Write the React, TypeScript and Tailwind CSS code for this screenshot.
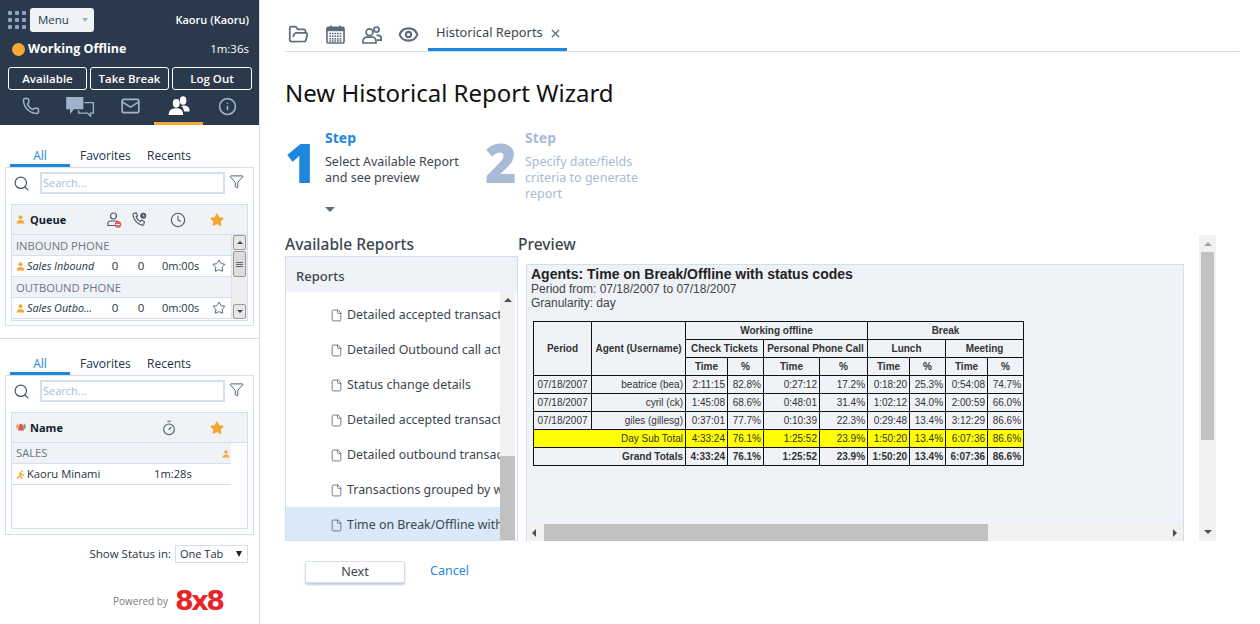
import React from 'react';
import { Phone, Mail, Info, Search, Funnel, Clock, Star, FolderOpen, Eye, X, File, Timer } from 'lucide-react';

const Person = ({ className }: { className?: string }) => (
  <svg viewBox="0 0 10 10" className={className} fill="currentColor">
    <circle cx="5" cy="2.6" r="2.2" />
    <path d="M0.8 9.4c0-2.6 1.6-3.8 4.2-3.8s4.2 1.2 4.2 3.8z" />
  </svg>
);

const PersonBlocked = () => (
  <svg viewBox="0 0 15 16" className="w-[15px] h-[16px] text-[#4a5868]">
    <circle cx="6.500" cy="4" r="3" fill="none" stroke="currentColor" strokeWidth="1.2" />
    <path d="M0.800 13.500v-1.500c0-2 1.500-3 3.200-3h5c1 0 1.800.3 2.400 1M.8 13.500h7" fill="none" stroke="currentColor" strokeWidth="1.2" />
    <circle cx="11" cy="12.500" r="3.200" fill="#e8555a" />
    <rect x="9" y="12" width="4" height="1.100" fill="#fff" />
  </svg>
);

const PhoneClock = () => (
  <svg viewBox="0 0 16 16" className="w-[15px] h-[15px] text-[#4a5868]" fill="none" stroke="currentColor" strokeWidth="1.2">
    <path d="M2 1.500l2.500-.5 1.500 3-1.500 1.300c.7 2 2.200 3.800 4.300 4.800l1.400-1.400 3 1.500-.5 2.800c-.3.8-1 1.200-2 1C5.500 13 1.500 8 1 3c0-.7.300-1.200 1-1.500z" />
    <circle cx="12" cy="4" r="3.200" fill="currentColor" stroke="none" />
    <path d="M12 2.500V4.300h1.500" stroke="#eff2f7" strokeWidth="0.900" />
  </svg>
);

const PeopleSolid = ({ className }: { className?: string }) => (
  <svg viewBox="0 0 24 22" className={className} fill="currentColor">
    <ellipse cx="16.5" cy="5" rx="3.6" ry="4.6" />
    <path d="M14.5 11c3-1 6-.5 8 1.500 1 1.200 1.200 3 1 4.500h-6c-.2-2.500-1.200-4.500-3-6z" />
    <ellipse cx="9" cy="8" rx="3.8" ry="4.8" />
    <path d="M0.600 21c0-5 2.600-7.600 8.400-7.600s7.500 2.600 7.500 7.600z" />
  </svg>
);

const ChatBubbles = ({ className }: { className?: string }) => (
  <svg viewBox="0 0 30 22" className={className}>
    <path d="M0 1h18v13H8l-4 5v-5H0z" fill="currentColor" />
    <path d="M19 7h9.500v11h-3v3l-3-3H13v-3" fill="none" stroke="currentColor" strokeWidth="1.400" />
  </svg>
);

const CalendarGrid = () => (
  <svg viewBox="0 0 20 20" className="w-[19px] h-[19px] text-[#5c6b7d]">
    <rect x="1" y="2.500" width="18" height="16.500" rx="1.500" fill="none" stroke="currentColor" strokeWidth="1.700" />
    <rect x="1" y="2.500" width="18" height="4" fill="currentColor" />
    <rect x="4.500" y="0.500" width="1.600" height="3" fill="currentColor" />
    <rect x="13.900" y="0.500" width="1.600" height="3" fill="currentColor" />
    {[8.2, 11, 13.8, 16].map((y) =>
      [3.5, 6.2, 8.9, 11.6, 14.3].map((x) => <rect key={`${x}-${y}`} x={x} y={y} width="1.800" height="1.600" fill="currentColor" />)
    )}
  </svg>
);

const PeopleOutline = () => (
  <svg viewBox="0 0 20 18" className="w-[20px] h-[18px] text-[#5c6b7d]" fill="none" stroke="currentColor" strokeWidth="1.700">
    <circle cx="7.500" cy="6.200" r="3.400" />
    <path d="M1 17v-1.800c0-2.600 2-4 4-4h5c2 0 4 1.400 4 4V17z" />
    <circle cx="14.500" cy="3.600" r="2.600" />
    <path d="M14.500 9.400h1.500c2 0 3.200 1.200 3.200 3.200v1.600h-4.500" />
  </svg>
);

const AgentStatusIcon = () => (
  <svg viewBox="0 0 14 12" className="w-[12px] h-[11px]">
    <path d="M1 5l2-4 1.500 3-1.500 4z" fill="#f4a836" />
    <path d="M13 5l-2-4-1.500 3 1.500 4z" fill="#54b36a" />
    <path d="M7 1.500c2 0 3 3 3.500 8h-7c.5-5 1.500-8 3.500-8z" fill="#e8555a" />
  </svg>
);

const RunningIcon = () => (
  <svg viewBox="0 0 10 10" className="w-[9px] h-[9px] text-[#f4a836]" fill="none" stroke="currentColor" strokeWidth="1.400">
    <circle cx="6.800" cy="1.400" r="1.100" fill="currentColor" stroke="none" />
    <path d="M2.500 4l3-.8 1 2.300 2.500.5M5.500 3.500L4.500 6.500 1 9.500M4.500 6.500l1.500 1.500V10" />
  </svg>
);

const Scrollbar = () => (
  <div className="w-[16px] shrink-0 flex flex-col bg-[#eeeeee] border-l border-[#e2e2e2]">
    <div className="h-[15px] mx-px bg-[#e6e6e6] border border-[#9a9a9a] rounded-[2px] flex items-center justify-center">
      <span className="w-0 h-0 border-x-[3px] border-x-transparent border-b-[3px] border-b-[#444]" />
    </div>
    <div className="h-[26px] mx-px mt-px bg-[#dcdcdc] border border-[#9a9a9a] rounded-[2px] flex flex-col items-center justify-center gap-px">
      <span className="w-[7px] h-px bg-[#666]" />
      <span className="w-[7px] h-px bg-[#666]" />
      <span className="w-[7px] h-px bg-[#666]" />
    </div>
    <div className="flex-1" />
    <div className="h-[15px] mx-px bg-[#e6e6e6] border border-[#9a9a9a] rounded-[2px] flex items-center justify-center">
      <span className="w-0 h-0 border-x-[3px] border-x-transparent border-t-[3px] border-t-[#444]" />
    </div>
  </div>
);

const ListTabs = () => (
  <div className="flex h-[22px] pl-[10px] text-[12px] text-[#26323f]">
    <div className="w-[60px] text-center text-[#1f86e0] border-b-[3px] border-[#1f86e0] leading-[21px]">All</div>
    <div className="w-[68px] pl-[10px] leading-[21px]">Favorites</div>
    <div className="pl-[9px] leading-[21px]">Recents</div>
  </div>
);

const SearchRow = () => (
  <div className="flex h-[22px] items-center pl-[7px]">
    <Search className="w-[17px] h-[17px] text-[#4a5868]" strokeWidth={1.7} />
    <div className="ml-[10px] w-[185px] h-[22px] border-2 border-[#d3dfec] text-[11px] text-[#a7bbd6] pl-[1px] leading-[18px]">Search...</div>
    <Funnel className="ml-[4px] -mt-[4px] w-[15px] h-[15px] text-[#4a5868]" strokeWidth={1.5} />
  </div>
);

const QueueRow = ({ name }: { name: string }) => (
  <div className="flex items-center h-[21px] bg-white border-b border-[#d3dfec] text-[11.5px] text-[#26323f]">
    <Person className="ml-[4px] w-[9px] h-[9px] text-[#f4a836]" />
    <span className="ml-[2px] w-[80px] italic text-[10.8px] truncate">{name}</span>
    <span className="w-[10px] ml-[3px] text-center">0</span>
    <span className="w-[10px] ml-[16px] text-center">0</span>
    <span className="w-[38px] ml-[16px] text-[11px] whitespace-nowrap">0m:00s</span>
    <Star className="ml-[12px] w-[14px] h-[14px] shrink-0 text-[#4a5868]" strokeWidth={1.6} />
  </div>
);

const QueuePanel = () => (
  <div className="mx-[5px] h-[159px] border border-[#d3dfec] pt-[4px]">
    <SearchRow />
    <div className="mt-[10px] mx-[5px] h-[117px] border border-[#d3dfec]">
      <div className="flex items-center h-[30px] bg-[#eff2f7] border-b border-[#d3dfec] text-[11px] font-bold text-[#14202c]">
        <Person className="ml-[4px] w-[9px] h-[9px] text-[#f4a836]" />
        <span className="ml-[5px] w-[77px] pt-[2px]">Queue</span>
        <PersonBlocked />
        <span className="ml-[10px]"><PhoneClock /></span>
        <Clock className="ml-[23px] w-[16px] h-[16px] text-[#4a5868]" strokeWidth={1.6} />
        <Star className="ml-[24px] w-[14px] h-[14px] text-[#f4a836] fill-[#f4a836]" />
      </div>
      <div className="flex h-[84px]">
        <div className="flex-1 min-w-0">
          <div className="h-[21px] bg-[#eff2f7] border-b border-[#d3dfec] pl-[4px] text-[11.2px] text-[#6b7786] leading-[22px]">INBOUND PHONE</div>
          <QueueRow name="Sales Inbound" />
          <div className="h-[21px] bg-[#eff2f7] border-b border-[#d3dfec] pl-[4px] text-[11.2px] text-[#6b7786] leading-[22px]">OUTBOUND PHONE</div>
          <QueueRow name="Sales Outbo..." />
        </div>
        <Scrollbar />
      </div>
    </div>
  </div>
);

const AgentPanel = () => (
  <div className="mx-[5px] h-[160px] border border-[#d3dfec] pt-[4px]">
    <SearchRow />
    <div className="mt-[10px] mx-[5px] h-[117px] border border-[#d3dfec]">
      <div className="flex items-center h-[30px] bg-[#eff2f7] border-b border-[#d3dfec] text-[11px] font-bold text-[#14202c]">
        <span className="ml-[3px] w-[14px]"><AgentStatusIcon /></span>
        <span className="ml-[1px] w-[131px] pt-[2px]">Name</span>
        <Timer className="w-[16px] h-[16px] text-[#4a5868]" strokeWidth={1.6} />
        <Star className="ml-[33px] w-[14px] h-[14px] text-[#f4a836] fill-[#f4a836]" />
      </div>
      <div className="w-[219px]">
        <div className="flex items-center justify-between h-[21px] bg-[#eff2f7] border-b border-[#d3dfec] pl-[4px] pr-[1px] pt-[1px] text-[11.2px] text-[#6b7786]">
          SALES
          <Person className="w-[8px] h-[8px] text-[#f4a836]" />
        </div>
        <div className="flex items-center h-[21px] border-b border-[#d3dfec] pt-[1px] text-[11.2px] text-[#26323f]">
          <span className="ml-[4px] w-[11px]"><RunningIcon /></span>
          <span className="w-[127px]">Kaoru Minami</span>
          <span>1m:28s</span>
        </div>
      </div>
    </div>
  </div>
);

const Sidebar = () => (
  <aside className="w-[260px] h-[624px] shrink-0 border-r border-[#d3dfec] bg-white font-['Open_Sans',sans-serif]">
    <div className="h-[125px] bg-[#2a394b] text-white relative">
      <div className="flex items-center h-[40px] pl-[8px] pr-[10px]">
        <div className="grid grid-cols-3 gap-[3px]">
          {[...Array(9).keys()].map((n) => <span key={n} className="w-[4px] h-[4px] bg-[#8ea3bf] rounded-[1px]" />)}
        </div>
        <div className="ml-[4px] w-[64px] h-[24px] bg-[#eff2f7] rounded-[3px] flex items-center pl-[8px] text-[11.5px] text-[#2a394b]">
          Menu
          <span className="ml-[13px] w-0 h-0 border-x-[3.5px] border-x-transparent border-t-[4px] border-t-[#9fb0c6]" />
        </div>
        <span className="ml-auto text-[11px] font-semibold">Kaoru (Kaoru)</span>
      </div>
      <div className="flex items-center h-[18px] pl-[12px] pr-[10px]">
        <span className="w-[13px] h-[13px] rounded-full bg-[#f4a836]" />
        <span className="ml-[3px] text-[12.5px] font-bold">Working Offline</span>
        <span className="ml-auto text-[11.5px]">1m:36s</span>
      </div>
      <div className="flex gap-[3px] pl-[8px] mt-[9px]">
        <div className="w-[79px] h-[23px] border border-white rounded-[3px] text-center text-[11.5px] font-semibold leading-[21px]">Available</div>
        <div className="w-[79px] h-[23px] border border-white rounded-[3px] text-center text-[11.5px] font-semibold leading-[21px]">Take Break</div>
        <div className="w-[80px] h-[23px] border border-white rounded-[3px] text-center text-[11.5px] font-semibold leading-[21px]">Log Out</div>
      </div>
      <div className="flex items-center h-[26px] mt-[3px] text-[#9fb3cf]">
        <Phone className="ml-[22px] w-[18px] h-[18px]" strokeWidth={2} />
        <ChatBubbles className="ml-[26px] w-[29px] h-[21px]" />
        <Mail className="ml-[25px] w-[21px] h-[20px]" strokeWidth={2} />
        <PeopleSolid className="ml-[27px] w-[22px] h-[20px] text-white" />
        <Info className="ml-[28px] w-[19px] h-[19px]" strokeWidth={2} />
      </div>
      <div className="absolute left-[154px] bottom-0 w-[49px] h-[3px] bg-[#f4a836]" />
    </div>
    <div className="pt-[20px] h-[214px] border-b border-[#d3dfec]">
      <ListTabs />
      <QueuePanel />
    </div>
    <div className="pt-[14px]">
      <ListTabs />
      <AgentPanel />
    </div>
    <div className="flex items-center justify-end h-[18px] mt-[10px] pr-[11px] text-[11.5px] text-[#26323f]">
      Show Status in:
      <div className="ml-[4px] w-[73px] h-[18px] border border-[#d3dfec] flex items-center pl-[4px] text-[11px]">
        One Tab
        <span className="ml-auto mr-[5px] w-0 h-0 border-x-[3.5px] border-x-transparent border-t-[6px] border-t-[#222]" />
      </div>
    </div>
    <div className="flex items-center mt-[26px] pl-[113px] h-[24px]">
      <span className="text-[10px] text-[#7c7c7c]">Powered by</span>
      <span className="ml-[7px] text-[#e4262a] text-[27px] leading-[24px] font-bold font-['DejaVu_Sans',sans-serif] tracking-[-2.5px]">8x8</span>
    </div>
  </aside>
);

const cols = ['w-[58px]', 'w-[94px]', 'w-[42px]', 'w-[36px]', 'w-[56px]', 'w-[48px]', 'w-[42px]', 'w-[36px]', 'w-[42px]', 'w-[36px]'];

const rows = [
  ['07/18/2007', 'beatrice (bea)', '2:11:15', '82.8%', '0:27:12', '17.2%', '0:18:20', '25.3%', '0:54:08', '74.7%'],
  ['07/18/2007', 'cyril (ck)', '1:45:08', '68.6%', '0:48:01', '31.4%', '1:02:12', '34.0%', '2:00:59', '66.0%'],
  ['07/18/2007', 'giles (gillesg)', '0:37:01', '77.7%', '0:10:39', '22.3%', '0:29:48', '13.4%', '3:12:29', '86.6%'],
];
const totals = ['4:33:24', '76.1%', '1:25:52', '23.9%', '1:50:20', '13.4%', '6:07:36', '86.6%'];

const cell = 'border border-[#111] h-[18px] px-[2px] py-0 text-right text-[#333] whitespace-nowrap';
const head = 'border border-[#111] h-[18px] px-0 py-0 text-center font-bold text-[#333] whitespace-nowrap';
const dateCell = 'border border-[#111] h-[18px] px-0 py-0 text-center text-[#333]';

const ReportTable = () => (
  <table className="mt-[10px] ml-[2px] w-[490px] table-fixed border-collapse text-[10px] leading-[16px] font-['Liberation_Sans',sans-serif]">
    <colgroup>
      {cols.map((c, i) => <col key={i} className={c} />)}
    </colgroup>
    <tbody>
      <tr>
        <td rowSpan={3} className={head}>Period</td>
        <td rowSpan={3} className={head}>Agent (Username)</td>
        <td colSpan={4} className={head}>Working offline</td>
        <td colSpan={4} className={head}>Break</td>
      </tr>
      <tr>
        <td colSpan={2} className={head}>Check Tickets</td>
        <td colSpan={2} className={head}>Personal Phone Call</td>
        <td colSpan={2} className={head}>Lunch</td>
        <td colSpan={2} className={head}>Meeting</td>
      </tr>
      <tr>
        {['Time', '%', 'Time', '%', 'Time', '%', 'Time', '%'].map((t, i) => <td key={i} className={head}>{t}</td>)}
      </tr>
      {rows.map((r) => (
        <tr key={r[1]}>
          {r.map((v, i) => <td key={i} className={i === 0 ? dateCell : cell}>{v}</td>)}
        </tr>
      ))}
      <tr className="bg-[#ffff00]">
        <td colSpan={2} className={cell}>Day Sub Total</td>
        {totals.map((v, i) => <td key={i} className={cell}>{v}</td>)}
      </tr>
      <tr className="font-bold">
        <td colSpan={2} className={cell}>Grand Totals</td>
        {totals.map((v, i) => <td key={i} className={cell}>{v}</td>)}
      </tr>
    </tbody>
  </table>
);

const reports = [
  'Detailed accepted transactions',
  'Detailed Outbound call activity',
  'Status change details',
  'Detailed accepted transactions',
  'Detailed outbound transactions',
  'Transactions grouped by wait time',
  'Time on Break/Offline with status codes',
];

const Step = ({ n, active, lines, className }: { n: string; active: boolean; lines: string[]; className: string }) => (
  <div className={`flex ${className}`}>
    <div className={`w-[40px] pt-[1px] text-[54px] leading-[62px] font-extrabold font-['Open_Sans',sans-serif] ${active ? 'text-[#1f86e0]' : 'text-[#a7bbd6]'}`}>{n}</div>
    <div className="w-[130px]">
      <div className={`text-[14px] font-bold leading-[16px] ${active ? 'text-[#1f86e0]' : 'text-[#a7bbd6]'}`}>Step</div>
      <div className={`mt-[8px] text-[12.5px] leading-[16px] ${active ? 'text-[#3c4650]' : 'text-[#a7bbd6]'}`}>
        {lines.map((l) => <div key={l} className="whitespace-nowrap">{l}</div>)}
      </div>
      {active && <div className="mt-[21px] w-0 h-0 border-x-[5px] border-x-transparent border-t-[5px] border-t-[#5c6b7d]" />}
    </div>
  </div>
);

const Main = () => (
  <main className="flex-1 min-w-0 pl-[25px] pr-[20px] font-['Noto_Sans',sans-serif]">
    <div className="flex items-center h-[52px] pt-[18px] border-b border-[#d3dfec]">
      <FolderOpen className="ml-[3px] w-[21px] h-[21px] text-[#5c6b7d]" strokeWidth={2} />
      <span className="ml-[17px]"><CalendarGrid /></span>
      <span className="ml-[17px]"><PeopleOutline /></span>
      <Eye className="ml-[16px] w-[21px] h-[21px] text-[#5c6b7d]" strokeWidth={2.4} />
      <div className="ml-[9px] h-[33px] w-[139px] border-b-[3px] border-[#1f86e0] flex items-center pl-[8px] text-[12.8px] text-[#3c4650]">
        Historical Reports
        <X className="ml-[6px] w-[13px] h-[13px] text-[#5c6b7d]" strokeWidth={2.4} />
      </div>
    </div>
    <h1 className="mt-[23px] h-[36px] text-[24px] leading-[36px] text-[#111]">New Historical Report Wizard</h1>
    <div className="flex h-[105px] mt-[19px]">
      <Step n="1" active lines={['Select Available Report', 'and see preview']} className="w-[200px]" />
      <Step n="2" active={false} lines={['Specify date/fields', 'criteria to generate', 'report']} className="" />
    </div>
    <div className="flex h-[306px]">
      <section className="w-[233px] shrink-0">
        <h2 className="h-[21px] text-[15.5px] font-medium leading-[18px] text-[#3c4650]">Available Reports</h2>
        <div className="h-[285px] border border-[#d3dfec] flex flex-col overflow-hidden">
          <div className="h-[35px] shrink-0 bg-[#eff2f7] pl-[10px] text-[13px] font-medium leading-[38px] text-[#3c4650]">Reports</div>
          <div className="flex-1 flex min-h-0">
            <div className="w-[214px] pt-[5px] overflow-hidden">
              {reports.map((r, i) => (
                <div key={i} className={`flex items-center h-[35px] pl-[44px] pt-[1px] text-[12.4px] text-[#3c4650] whitespace-nowrap ${i === 6 ? 'bg-[#d9e9f8]' : ''}`}>
                  <File className="w-[13px] h-[15px] shrink-0 text-[#5c6b7d]" strokeWidth={1.6} />
                  <span className="ml-[4px]">{r}</span>
                </div>
              ))}
            </div>
            <div className="w-[15px] bg-[#f1f1f1] flex flex-col items-center">
              <div className="h-[164px] pt-[6px]">
                <span className="block w-0 h-0 border-x-[4px] border-x-transparent border-b-[4px] border-b-[#505050]" />
              </div>
              <div className="flex-1 w-full bg-[#c1c1c1]" />
            </div>
          </div>
        </div>
      </section>
      <section className="w-[666px] shrink-0">
        <h2 className="h-[21px] text-[15.5px] font-medium leading-[18px] text-[#3c4650]">Preview</h2>
        <div className="mt-[8px] ml-[8px] h-[277px] border border-[#d3dfec] border-b-0 bg-[#eff2f7] flex flex-col font-['Liberation_Sans',sans-serif]">
          <div className="flex-1 pl-[4px] pt-[1px] text-[#444]">
            <div className="text-[14px] font-bold leading-[16px] text-[#222]">Agents: Time on Break/Offline with status codes</div>
            <div className="text-[12px] leading-[14px]">Period from: 07/18/2007 to 07/18/2007</div>
            <div className="text-[12px] leading-[15px]">Granularity: day</div>
            <ReportTable />
          </div>
          <div className="h-[17px] bg-[#f1f1f1] flex items-center">
            <span className="ml-[5px] w-0 h-0 border-y-[4px] border-y-transparent border-r-[4px] border-r-[#505050]" />
            <div className="ml-[8px] w-[444px] h-full bg-[#c1c1c1]" />
            <span className="ml-auto mr-[6px] w-0 h-0 border-y-[4px] border-y-transparent border-l-[4px] border-l-[#505050]" />
          </div>
        </div>
      </section>
      <div className="ml-[15px] w-[17px] h-[306px] bg-[#f1f1f1] flex flex-col items-center">
        <span className="mt-[7px] w-0 h-0 border-x-[4px] border-x-transparent border-b-[4px] border-b-[#a3a3a3]" />
        <div className="mt-[6px] w-[13px] h-[188px] bg-[#c1c1c1]" />
        <span className="mt-auto mb-[7px] w-0 h-0 border-x-[4px] border-x-transparent border-t-[4px] border-t-[#505050]" />
      </div>
    </div>
    <div className="flex items-center mt-[17px] pl-[20px] h-[28px]">
      <div className="w-[100px] h-[22px] bg-white border border-[#d3dfec] rounded-[2px] shadow-[0_2px_2px_#c4cfdc] text-center text-[12.6px] leading-[20px] text-[#3c4650]">Next</div>
      <span className="ml-[25px] -mt-[2px] text-[12.5px] text-[#1f86e0]">Cancel</span>
    </div>
  </main>
);

export default function App() {
  return (
    <div className="flex w-[1260px] h-[624px] bg-white overflow-hidden">
      <Sidebar />
      <Main />
    </div>
  );
}
